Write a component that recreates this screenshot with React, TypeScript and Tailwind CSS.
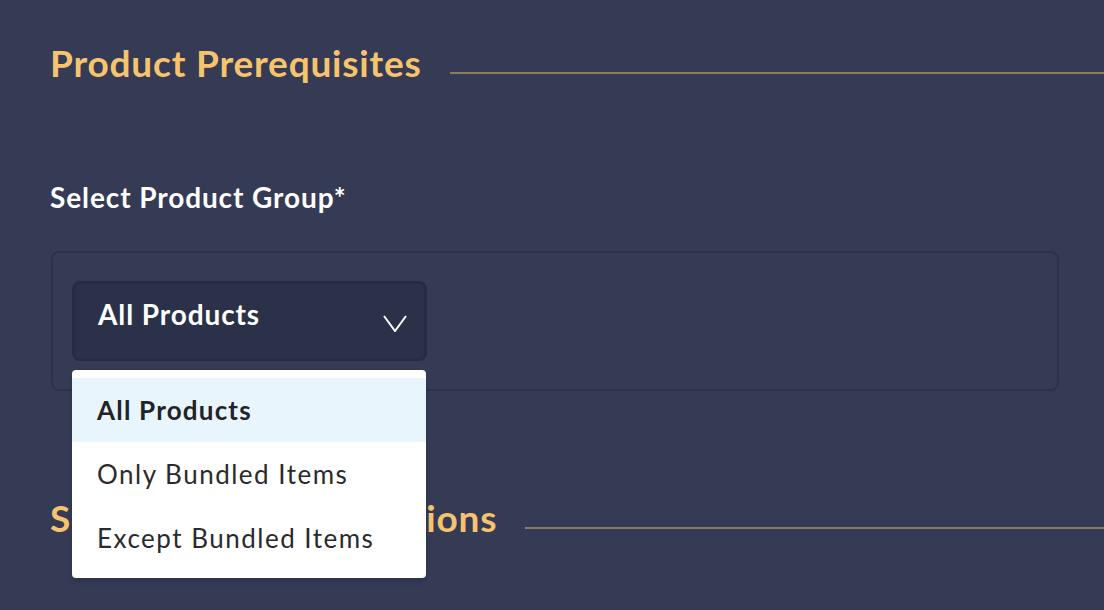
import React from 'react'

function SectionTitle({ children }: { children: React.ReactNode }) {
  return (
    <div className="flex items-start gap-[28px]">
      <h2 className="shrink-0 text-[37px] font-bold leading-none tracking-[0.8px] text-[#f6c46f]">{children}</h2>
      <div className="mt-[28px] h-[2px] flex-1 bg-[#8c7a64]" />
    </div>
  )
}

const options = ['All Products', 'Only Bundled Items', 'Except Bundled Items']

export default function App() {
  return (
    <div
      className="h-[610px] w-[1104px] overflow-hidden bg-[#353a55] pl-[50px] pt-[44px]"
      style={{ fontFamily: 'Lato, "Noto Sans", sans-serif' }}
    >
      <SectionTitle>Product Prerequisites</SectionTitle>

      <div className="mt-[102px] text-[28px] font-bold leading-none tracking-[0.9px] text-white">
        Select Product Group*
      </div>

      <div className="ml-px mr-[45px] mt-[40px] h-[140px] rounded-lg border-2 border-[#2d3249] pl-[19px] pt-[28px]">
        <div className="relative w-[355px]">
          <button className="flex h-[80px] w-full items-center justify-between rounded-lg border-[3px] border-[#272c42] bg-[#2b3149] pl-[23px] pr-[17px] text-[28px] font-bold leading-none tracking-[0.9px] text-white">
            <span className="mb-[14px]">All Products</span>
            <svg className="mt-[4px]" width="24" height="17" viewBox="0 0 24 17" fill="none" stroke="white" strokeWidth="2">
              <path d="M1 1l11 15L23 1" />
            </svg>
          </button>
          <ul className="absolute left-0 top-[89px] z-10 w-[354px] rounded bg-white py-2 shadow-md">
            {options.map((o, i) => (
              <li
                key={o}
                className={
                  i === 0
                    ? 'flex h-[64px] items-center bg-[#e8f5fd] pl-[25px] text-[26px] font-bold leading-none tracking-[1.2px] text-[#222327]'
                    : 'flex h-[64px] items-center pl-[25px] text-[26px] font-normal leading-none tracking-[1.5px] text-[#2a2a2e]'
                }
              >
                {o}
              </li>
            ))}
          </ul>
        </div>
      </div>

      <div className="mt-[108px]">
        <SectionTitle>Select Product Conditions</SectionTitle>
      </div>
    </div>
  )
}
